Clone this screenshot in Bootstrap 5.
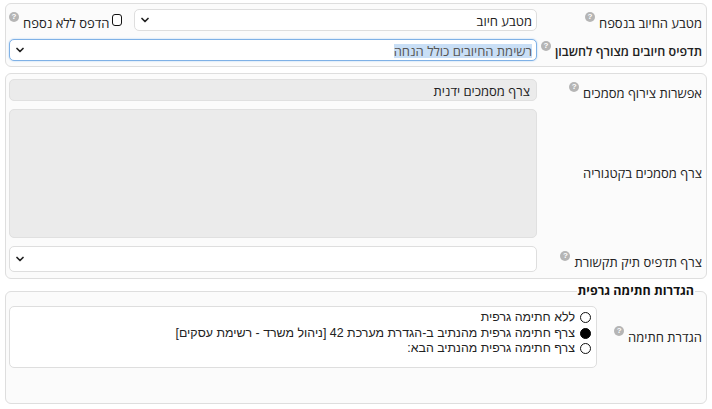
<!DOCTYPE html>
<html lang="he" dir="rtl">

<head>
    <meta charset="UTF-8">
    <meta name="viewport" content="width=device-width, initial-scale=1.0">
    <title>הגדרות הדפסה</title>
    <link href="https://cdn.jsdelivr.net/npm/bootstrap@5.3.2/dist/css/bootstrap.min.css" rel="stylesheet">
    <script src="https://cdn.jsdelivr.net/npm/bootstrap@5.3.2/dist/js/bootstrap.bundle.min.js"></script>
    <style>
        body {
            font-family: "Open Sans", "Noto Sans", "Liberation Sans", sans-serif;
            font-size: 13px;
            line-height: 16px;
            color: #222;
            background: #fff;
            padding: 3px 5px 0;
        }

        .box {
            background: #fbfbfb;
            border: 1px solid #dedede;
            border-radius: 6px;
            padding: 5px 4px 5px 3px;
            margin-bottom: 6px;
        }

        .box-tall {
            padding-bottom: 6px;
        }

        .box-titled {
            margin-top: -1px;
            padding-top: 0;
            padding-bottom: 35px;
        }

        .box-titled legend {
            float: none;
            width: auto;
            font-size: 12.5px;
            line-height: 14px;
            font-weight: 700;
            margin: 0 7px 8px 0;
            padding: 0 1px;
            color: #111;
        }

        .lbl-col {
            width: 165px;
            flex: none;
        }

        .lbl-narrow {
            width: 105px;
        }

        .lbl-text {
            padding-top: 6px;
        }

        .lbl-tight {
            padding-top: 5px;
            font-size: 12.5px;
        }

        .lbl-low {
            padding-top: 8px;
        }

        .lbl-mid {
            padding-bottom: 2px;
        }

        .help {
            display: inline-block;
            width: 10px;
            height: 10px;
            border-radius: 50%;
            background: #b5b5b5;
            color: #fff;
            font-size: 8px;
            line-height: 10px;
            font-weight: 700;
            text-align: center;
            vertical-align: top;
            margin-top: -3px;
            margin-right: 4px;
            font-family: "Liberation Sans", sans-serif;
        }

        .form-select.fld {
            height: 22px;
            min-height: 0;
            font-size: 13px;
            line-height: 16px;
            color: #222;
            padding: 3px 4px 1px 24px;
            border: 1px solid #dedede;
            border-radius: 5px;
            background-image: url("data:image/svg+xml,%3csvg xmlns='http://www.w3.org/2000/svg' viewBox='0 0 16 16'%3e%3cpath fill='none' stroke='%23222' stroke-linecap='round' stroke-linejoin='round' stroke-width='3.4' d='m2 5 6 6 6-6'/%3e%3c/svg%3e");
            background-position: left 6px center;
            background-size: 8px 8px;
        }

        .fld-focus {
            border-color: #7fb1e6 !important;
            box-shadow: 0 0 2px #a9cdf2;
        }

        .fld-tall {
            height: 26px !important;
        }

        .sel-text {
            display: inline-block;
            line-height: 14px;
            background: #c9dff6;
            color: #555;
        }

        .readonly-fld {
            height: 22px;
            background: #ebebeb;
            border: 1px solid #e0e0e0;
            border-radius: 5px;
            padding: 3px 6px 1px;
        }

        .readonly-area {
            height: 129px;
            background: #ebebeb;
            border: 1px solid #e0e0e0;
            border-radius: 5px;
        }

        .radio-box {
            height: 62px;
            background: #fff;
            border: 1px solid #dedede;
            border-radius: 5px;
            padding: 3px 5px;
            font-family: "Liberation Sans", sans-serif;
            font-size: 12.4px;
            line-height: 15.5px;
        }

        .form-check-input.dot {
            width: 11px;
            height: 11px;
            margin: 0;
            border: 1px solid #111;
            background-image: none;
        }

        .form-check-input.dot:checked {
            background-color: #000;
            border-color: #000;
        }

        .form-check-input.chk {
            width: 12px;
            height: 12px;
            margin: 0 12px 0 2px;
            border: 1px solid #111;
            border-radius: 3px;
        }

        .chk-col {
            width: 125px;
            flex: none;
            padding-top: 5px;
        }

        .chk-text {
            padding-top: 1px;
        }

        .gap-row {
            margin-bottom: 8px;
        }

        .dot-gap {
            gap: 5px;
        }
    </style>
</head>

<body>
    <div class="box">
        <div class="d-flex gap-row">
            <div class="lbl-col lbl-text">מטבע החיוב בנספח<span class="help">?</span></div>
            <select class="form-select fld flex-grow-1 w-auto">
                <option>מטבע חיוב</option>
            </select>
            <div class="chk-col d-flex align-items-start">
                <input class="form-check-input chk mt-0" type="checkbox">
                <span class="text-nowrap chk-text">הדפס ללא נספח<span class="help">?</span></span>
            </div>
        </div>
        <div class="d-flex">
            <div class="lbl-col lbl-tight fw-semibold text-nowrap">תדפיס חיובים מצורף לחשבון<span class="help">?</span></div>
            <div class="form-select fld fld-focus flex-grow-1 w-auto"><span class="sel-text">רשימת החיובים כולל הנחה</span></div>
        </div>
    </div>

    <div class="box box-tall">
        <div class="d-flex gap-row">
            <div class="lbl-col lbl-text">אפשרות צירוף מסמכים<span class="help">?</span></div>
            <div class="readonly-fld flex-grow-1">צרף מסמכים ידנית</div>
        </div>
        <div class="d-flex gap-row align-items-center">
            <div class="lbl-col lbl-mid">צרף מסמכים בקטגוריה</div>
            <div class="readonly-area flex-grow-1"></div>
        </div>
        <div class="d-flex">
            <div class="lbl-col lbl-low">צרף תדפיס תיק תקשורת<span class="help">?</span></div>
            <select class="form-select fld fld-tall flex-grow-1 w-auto"></select>
        </div>
    </div>

    <fieldset class="box box-titled">
        <legend>הגדרות חתימה גרפית</legend>
        <div class="d-flex">
            <div class="lbl-col lbl-narrow align-self-center">הגדרת חתימה<span class="help">?</span></div>
            <div class="radio-box flex-grow-1">
                <div class="d-flex align-items-center dot-gap"><input class="form-check-input dot" type="radio" name="sig">ללא חתימה גרפית</div>
                <div class="d-flex align-items-center dot-gap"><input class="form-check-input dot" type="radio" name="sig" checked>צרף חתימה גרפית מהנתיב ב-הגדרת מערכת 42 [ניהול משרד - רשימת עסקים]</div>
                <div class="d-flex align-items-center dot-gap"><input class="form-check-input dot" type="radio" name="sig">צרף חתימה גרפית מהנתיב הבא:</div>
            </div>
        </div>
    </fieldset>
</body>

</html>
